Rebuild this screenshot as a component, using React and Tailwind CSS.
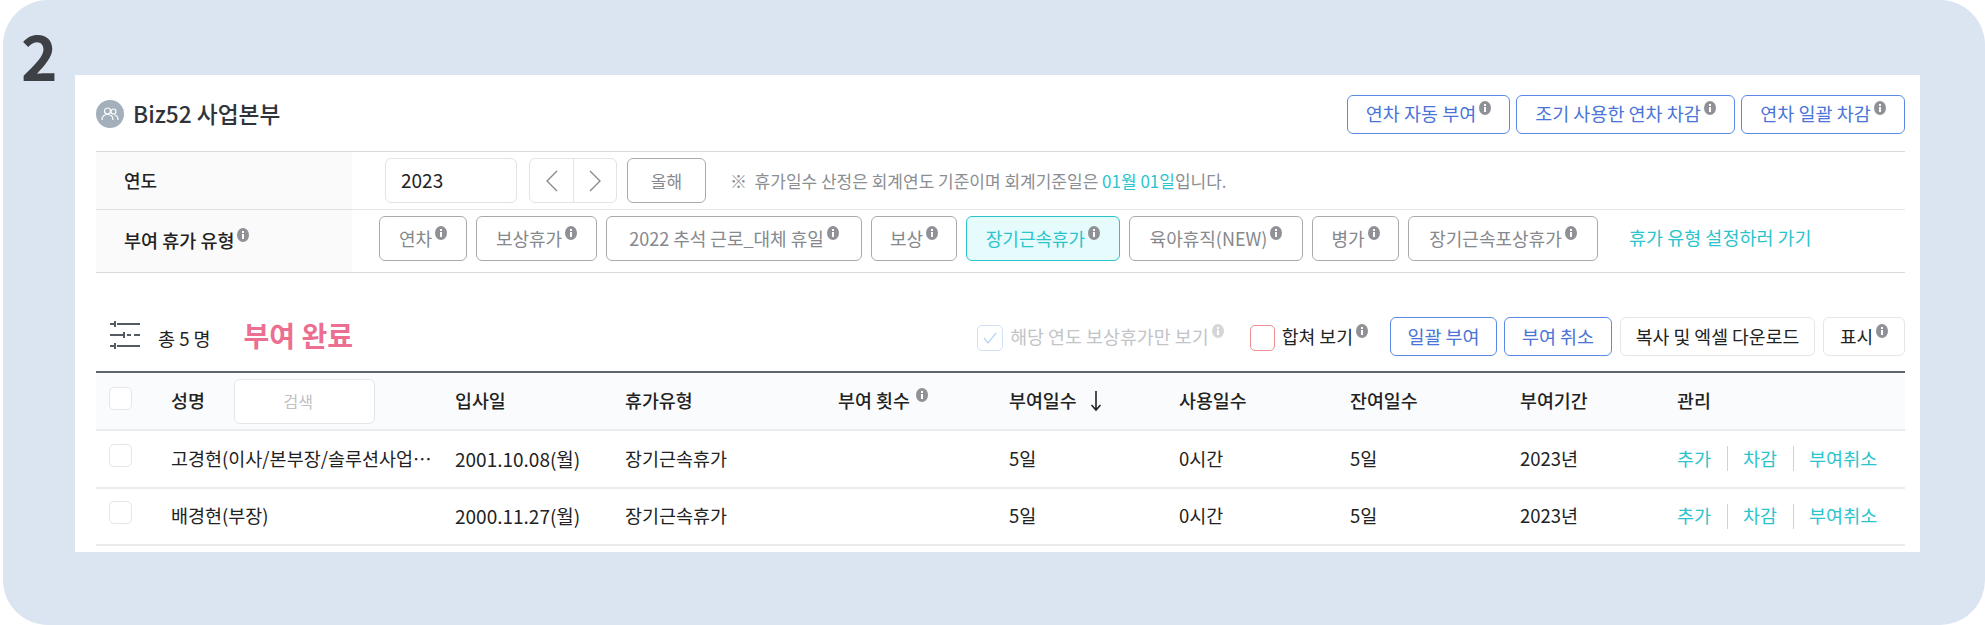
import React from "react";

const font = { fontFamily: '"Noto Sans CJK KR", "Noto Sans", sans-serif' };

const Info = ({ className = "text-[#8f9196]" }) => (
    <svg viewBox="0 0 12 14" className={`w-[12px] h-[14px] shrink-0 ${className}`}>
        <ellipse cx="6" cy="7" rx="6" ry="7" fill="currentColor" />
        <rect x="5" y="6" width="2" height="5" fill="#fff" />
        <rect x="5" y="3" width="2" height="2" fill="#fff" />
    </svg>
);

const Sup = ({ children, className = "", iconClass }) => (
    <span className={`flex items-start gap-[3px] ${className}`}>
        <span>{children}</span>
        <span className="mt-[1px]"><Info className={iconClass} /></span>
    </span>
);

const BlueBtn = ({ w, children, info }) => (
    <button className={`${w} h-[39px] shrink-0 flex items-center justify-center rounded-[6px] border border-[#5a8ae6] bg-white text-[#4a74d8] text-[18.500px]`}>
        {info ? <Sup>{children}</Sup> : children}
    </button>
);

const tags = [
    { label: "연차", w: "w-[88px]" },
    { label: "보상휴가", w: "w-[121px]" },
    { label: "2022 추석 근로_대체 휴일", w: "w-[256px]" },
    { label: "보상", w: "w-[86px]" },
    { label: "장기근속휴가", w: "w-[154px]", active: true },
    { label: "육아휴직(NEW)", w: "w-[174px]" },
    { label: "병가", w: "w-[87px]" },
    { label: "장기근속포상휴가", w: "w-[190px]" },
];

const rows = [
    { name: "고경현(이사/본부장/솔루션사업…", date: "2001.10.08(월)" },
    { name: "배경현(부장)", date: "2000.11.27(월)" },
];

const gridCols = "grid grid-cols-[75px_284px_170px_213px_171px_170px_171px_170px_157px_228px] items-center";

const Check = () => (
    <span className="w-[23px] h-[23px] rounded-[5px] border border-[#e4e6e9] bg-white block" />
);

const Sliders = () => (
    <svg viewBox="0 0 30 30" className="w-[30px] h-[30px] text-[#555b63]" fill="none" stroke="currentColor" strokeWidth="2">
        <path d="M0 4h4M7 4h23M5 1v6M0 15h13M17 15h4M24 15h6M14 12v6M0 26h4M7 26h23M5 23v6" />
    </svg>
);

export default function App() {
    return (
        <div className="w-[1985px] h-[625px] bg-white overflow-hidden" style={font}>
            <div className="ml-[3px] w-[1982px] h-[625px] bg-[#dbe4f1] rounded-[45px]">
                <div className="h-[75px] pl-[18px] pt-[19px] text-[62px] leading-[70px] font-bold text-[#3d4045]">2</div>
                <div className="ml-[72px] w-[1845px] h-[477px] bg-white pl-[21px] pr-[15px]">
                    {/* title */}
                    <div className="h-[77px] flex items-center justify-between pt-[2px] border-b border-[#d9dadc]">
                        <div className="flex items-center gap-[9px]">
                            <span className="w-[28px] h-[28px] rounded-full bg-[#a3afbb] flex items-center justify-center">
                                <svg viewBox="0 0 20 20" className="w-[20px] h-[20px]" fill="none" stroke="#fff" strokeWidth="1.2">
                                    <circle cx="7.5" cy="7" r="3" />
                                    <path d="M2 16c0-4 2-5.500 5.500-5.500S13 12 13 16" />
                                    <circle cx="13.500" cy="7.500" r="2.500" />
                                    <path d="M14.500 11c2.500.3 3.500 2 3.500 5" />
                                </svg>
                            </span>
                            <span className="text-[22.700px] font-medium text-[#30343a]">Biz52 사업본부</span>
                        </div>
                        <div className="flex gap-[6px]">
                            <BlueBtn w="w-[163px]" info>연차 자동 부여</BlueBtn>
                            <BlueBtn w="w-[219px]" info>조기 사용한 연차 차감</BlueBtn>
                            <BlueBtn w="w-[164px]" info>연차 일괄 차감</BlueBtn>
                        </div>
                    </div>
                    {/* filter rows */}
                    <div className="h-[58px] flex border-b border-[#e2e3e5]">
                        <div className="w-[256px] bg-[#fafafa] pl-[28px] flex items-center text-[18px] font-medium text-[#222]">연도</div>
                        <div className="pl-[33px] flex items-center">
                            <div className="w-[132px] h-[45px] border border-[#e1e3e6] rounded-[6px] pl-[15px] flex items-center text-[19px] text-[#222]">2023</div>
                            <div className="ml-[12px] w-[88px] h-[45px] border border-[#e1e3e6] rounded-[6px] flex text-[#83878c]">
                                <span className="w-[44px] flex items-center justify-center border-r border-[#e1e3e6]">
                                    <svg viewBox="0 0 14 24" className="w-[14px] h-[24px]" fill="none" stroke="currentColor" strokeWidth="1.3"><path d="M12 2L2 12l10 10" /></svg>
                                </span>
                                <span className="flex-1 flex items-center justify-center">
                                    <svg viewBox="0 0 14 24" className="w-[14px] h-[24px]" fill="none" stroke="currentColor" strokeWidth="1.3"><path d="M2 2l10 10L2 22" /></svg>
                                </span>
                            </div>
                            <div className="ml-[10px] w-[79px] h-[45px] border border-[#a8abae] rounded-[6px] flex items-center justify-center text-[17px] text-[#85888c]">올해</div>
                            <div className="ml-[24px] text-[17px] text-[#8b8e92]">※&nbsp; 휴가일수 산정은 회계연도 기준이며 회계기준일은 <span className="text-[#2cc4cc]">01월 01일</span>입니다.</div>
                        </div>
                    </div>
                    <div className="h-[63px] flex border-b border-[#d9dadc]">
                        <div className="w-[256px] bg-[#fafafa] pl-[28px] flex items-center text-[18.500px] font-medium text-[#222]">
                            <Sup>부여 휴가 유형</Sup>
                        </div>
                        <div className="pl-[27px] flex items-start pt-[6px] gap-[9px]">
                            {tags.map((t) => (
                                <div key={t.label} className={`${t.w} h-[45px] shrink-0 rounded-[6px] border flex items-center justify-center text-[18px] ${t.active ? "border-[#2cc4cc] bg-[#e6fbfc] text-[#2cc4cc]" : "border-[#a8abae] text-[#85888c]"}`}>
                                    <Sup>{t.label}</Sup>
                                </div>
                            ))}
                            <span className="ml-[22px] mt-[8px] text-[18.500px] text-[#2cc4cc] whitespace-nowrap">휴가 유형 설정하러 가기</span>
                        </div>
                    </div>
                    {/* toolbar */}
                    <div className="h-[100px] flex items-end justify-between pb-[15px] border-b-2 border-[#5c6470]">
                        <div className="flex items-center">
                            <span className="ml-[14px]"><Sliders /></span>
                            <span className="ml-[18px] mt-[9px] text-[18.500px] text-[#222]">총 5 명</span>
                            <span className="ml-[33px] mt-[1px] text-[28px] font-bold text-[#ec6f92]">부여 완료</span>
                        </div>
                        <div className="flex items-center">
                            <span className="w-[26px] h-[26px] mt-[3px] rounded-[5px] border border-[#cfe0f8] flex items-center justify-center">
                                <svg viewBox="0 0 16 16" className="w-[16px] h-[16px]" fill="none" stroke="#bcd3f2" strokeWidth="1.3"><path d="M2 8l4 5 8-10" /></svg>
                            </span>
                            <Sup className="ml-[7px] text-[18.400px] text-[#c2c4c7]" iconClass="text-[#d5d6d8]">해당 연도 보상휴가만 보기</Sup>
                            <span className="ml-[26px] w-[25px] h-[26px] mt-[3px] rounded-[5px] border border-[#ec8f92]" />
                            <Sup className="ml-[7px] text-[18.300px] text-[#222]">합쳐 보기</Sup>
                            <div className="ml-[22px] flex gap-[7px]">
                                <BlueBtn w="w-[107px]">일괄 부여</BlueBtn>
                                <BlueBtn w="w-[108px]">부여 취소</BlueBtn>
                                <button className="w-[195px] h-[39px] ml-[1px] rounded-[6px] border border-[#e4e6e9] text-[18.300px] text-[#222]">복사 및 엑셀 다운로드</button>
                                <button className="w-[82px] h-[39px] ml-[1px] rounded-[6px] border border-[#e4e6e9] text-[18px] text-[#222] flex items-center justify-center"><Sup>표시</Sup></button>
                            </div>
                        </div>
                    </div>
                    {/* table */}
                    <div className={`${gridCols} h-[58px] bg-[#fafbfc] border-b-2 border-[#eaebed] text-[18.400px] font-medium text-[#222]`}>
                        <span className="pl-[13px] -mt-[5px]"><Check /></span>
                        <div className="flex items-center">
                            <span>성명</span>
                            <span className="ml-[29px] w-[141px] h-[45px] bg-white border border-[#e4e6e9] rounded-[6px] flex items-center justify-center pr-[12px] text-[16px] font-normal text-[#bfc1c4]">검색</span>
                        </div>
                        <span>입사일</span>
                        <span>휴가유형</span>
                        <Sup className="gap-[6px]">부여 횟수</Sup>
                        <span className="flex items-center gap-[13px]">
                            부여일수
                            <svg viewBox="0 0 12 22" className="w-[12px] h-[22px]" fill="none" stroke="#222" strokeWidth="1.6"><path d="M6 1v19M1.500 15L6 20l4.500-5" /></svg>
                        </span>
                        <span>사용일수</span>
                        <span>잔여일수</span>
                        <span>부여기간</span>
                        <span>관리</span>
                    </div>
                    {rows.map((r) => (
                        <div key={r.date} className={`${gridCols} h-[57.500px] border-b-2 border-[#eaebed] text-[18.500px] text-[#222]`}>
                            <span className="pl-[13px] -mt-[7px]"><Check /></span>
                            <span className="whitespace-nowrap">{r.name}</span>
                            <span className="text-[19px]">{r.date}</span>
                            <span>장기근속휴가</span>
                            <span />
                            <span>5일</span>
                            <span>0시간</span>
                            <span>5일</span>
                            <span>2023년</span>
                            <div className="flex items-center text-[#2cc4cc]">
                                <span>추가</span>
                                <span className="mx-[15.500px] w-[1px] h-[25px] bg-[#d0d2d4]" />
                                <span>차감</span>
                                <span className="mx-[15.500px] w-[1px] h-[25px] bg-[#d0d2d4]" />
                                <span>부여취소</span>
                            </div>
                        </div>
                    ))}
                </div>
            </div>
        </div>
    );
}
